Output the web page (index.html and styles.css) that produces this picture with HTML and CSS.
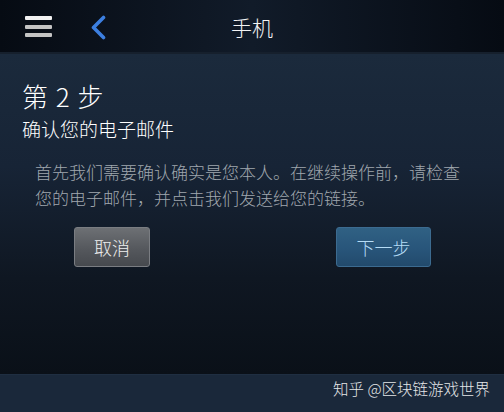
FILE: index.html
```html
<!DOCTYPE html>
<html lang="zh-CN">
<head>
    <meta charset="UTF-8">
    <meta name="viewport" content="width=device-width, initial-scale=1.0">
    <title>手机</title>
    <link rel="stylesheet" href="styles.css">
</head>
<body>
    <div class="app">
        <header class="topbar">
            <div class="menu-btn">
                <span class="bar bar-top"></span>
                <span class="bar"></span>
                <span class="bar"></span>
            </div>
            <svg class="back-btn" width="16" height="25" viewBox="0 0 16 25">
                <path d="M13.5 2.5 L3.5 12.5 L13.5 22.5" fill="none" stroke="#3c7fe0" stroke-width="3.6" stroke-linecap="round" stroke-linejoin="round"/>
            </svg>
            <h1 class="title">手机</h1>
        </header>

        <main class="content">
            <h2 class="step">第 2 步</h2>
            <h3 class="subtitle">确认您的电子邮件</h3>
            <p class="desc">首先我们需要确认确实是您本人。在继续操作前，请检查您的电子邮件，并点击我们发送给您的链接。</p>
            <div class="actions">
                <button class="btn btn-cancel">取消</button>
                <button class="btn btn-next">下一步</button>
            </div>
        </main>

        <footer class="footer">知乎 @区块链游戏世界</footer>
    </div>
</body>
</html>
```

FILE: styles.css
```css
html, body {
    margin: 0;
    padding: 0;
    height: 100%;
}
body {
    font-family: "Noto Sans CJK SC", "Noto Sans", sans-serif;
    font-weight: 300;
    background: #0b111a;
    color: #ffffff;
}
.app {
    display: flex;
    flex-direction: column;
    height: 412px;
}
.topbar {
    position: relative;
    height: 52px;
    display: flex;
    align-items: center;
    background: linear-gradient(90deg, #060b13 0%, #111b29 50%, #060b13 100%);
    border-bottom: 2px solid #16202d;
    flex-shrink: 0;
}
.menu-btn {
    display: flex;
    flex-direction: column;
    gap: 4.5px;
    margin-left: 25px;
    margin-top: 1px;
}
.bar {
    display: block;
    width: 27px;
    height: 4px;
    border-radius: 1px;
    background: #c4c4c4;
}
.bar-top {
    background: #f2f2f2;
}
.back-btn {
    margin-left: 38px;
    margin-top: 2px;
}
.title {
    position: absolute;
    left: 0;
    right: 0;
    top: 0;
    margin: 0;
    line-height: 54px;
    text-align: center;
    font-size: 21px;
    font-weight: 300;
    color: #f4f4f4;
}
.content {
    flex: 1;
    padding: 24px 22px 0 22px;
    background: linear-gradient(180deg, #1b2a3c 0%, #172436 35%, #0f1722 70%, #0a1018 100%);
}
.step {
    margin: 0;
    font-size: 26px;
    font-weight: 300;
    line-height: 36px;
    word-spacing: 2px;
}
.subtitle {
    margin: 1px 0 0 0;
    font-size: 19px;
    font-weight: 300;
    line-height: 28px;
}
.desc {
    width: 430px;
    margin: 16px 0 0 13px;
    font-size: 17px;
    line-height: 26px;
    color: #a0a7ae;
}
.actions {
    display: flex;
    justify-content: space-between;
    margin: 16px 51px 0 52px;
}
.btn {
    height: 40px;
    border-radius: 3px;
    font-family: inherit;
    font-weight: 300;
    font-size: 18px;
    padding: 0;
    cursor: pointer;
}
.btn-cancel {
    width: 76px;
    color: #f0f0f0;
    border: 1px solid #7a7d82;
    background: linear-gradient(180deg, #6d7074 0%, #55585d 55%, #46494e 100%);
}
.btn-next {
    width: 95px;
    color: #b6dcf6;
    border: 1px solid #3c6b90;
    background: linear-gradient(180deg, #306184 0%, #28557a 55%, #224a6c 100%);
}
.footer {
    height: 37px;
    flex-shrink: 0;
    background: #1a283a;
    border-top: 1px solid #1f2e41;
    color: #e4e6e8;
    font-size: 15.5px;
    text-align: right;
    padding-right: 14px;
    line-height: 27px;
}
```
